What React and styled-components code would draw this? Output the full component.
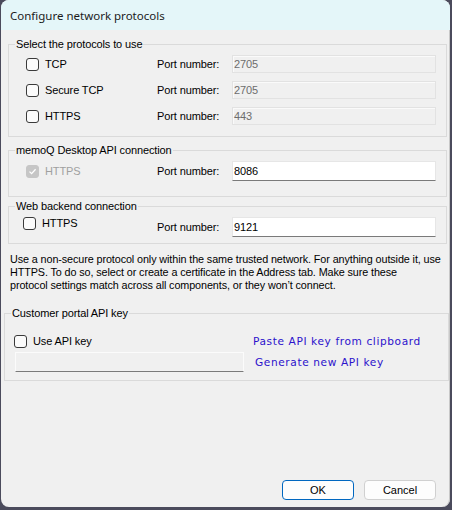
import React from 'react'
import styled, { createGlobalStyle } from 'styled-components'

const GlobalStyle = createGlobalStyle`
  html, body {
    margin: 0;
    padding: 0;
    background: #4b4b5c;
  }
  body {
    font-family: "Liberation Sans", Arial, sans-serif;
    font-size: 11px;
    letter-spacing: -0.12px;
    color: #000;
  }
`

const Window = styled.div`
  margin-left: 1px;
  width: 449px;
  height: 507px;
  background: #f0f0f0;
  border-radius: 8px;
  overflow: hidden;
  display: flex;
  flex-direction: column;
  box-shadow: inset -1px 0 0 #c8c8c8;
`

const TitleBar = styled.div`
  height: 30px;
  flex-shrink: 0;
  background: #e4f6f9;
  display: flex;
  align-items: center;
  padding-left: 9px;
  font-family: "Noto Sans", "Open Sans", sans-serif;
  font-size: 11.5px;
  letter-spacing: 0;
  color: #1b1b1b;
`

const Group = styled.fieldset`
  margin: ${p => p.$top}px 0 0 ${p => p.$left}px;
  width: ${p => p.$width}px;
  box-sizing: border-box;
  padding: 0;
  border: 1px solid #dadada;
  min-width: 0;
`

const Legend = styled.legend`
  margin-left: 6px;
  padding: 0 1px;
  line-height: 14px;
  font-size: 11px;
  color: #000;
`

const GroupBody = styled.div`
  padding: ${p => p.$pad};
  display: flex;
  flex-direction: column;
  gap: 8px;
`

const Row = styled.div`
  display: grid;
  grid-template-columns: ${p => p.$first}px 75px 1fr;
  height: ${p => p.$h}px;
  align-items: center;
`

const CheckLabel = styled.label`
  display: flex;
  align-items: center;
  gap: 6px;
  color: ${p => (p.$disabled ? '#a0a0a0' : '#000')};
  align-self: ${p => (p.$top ? 'start' : 'center')};
  line-height: 13px;
`

const Box = styled.span`
  width: 13px;
  height: 13px;
  box-sizing: border-box;
  border-radius: 3px;
  border: 1px solid ${p => (p.$checked ? '#c6c6c6' : '#3a3a3a')};
  background: ${p => (p.$checked ? '#c6c6c6' : '#fbfbfb')};
  display: flex;
  align-items: center;
  justify-content: center;
  flex-shrink: 0;
`

const PortLabel = styled.span`
  color: #000;
`

const PortInput = styled.div`
  height: ${p => (p.$disabled ? 18 : 20)}px;
  box-sizing: border-box;
  background: ${p => (p.$disabled ? '#f0f0f0' : '#fff')};
  border: 1px solid ${p => (p.$disabled ? '#e2e2e2' : '#e6e6e6')};
  border-bottom-color: ${p => (p.$disabled ? '#e2e2e2' : '#7a7a7a')};
  box-shadow: ${p => (p.$disabled ? 'inset 1px 1px 0 #fafafa' : 'none')};
  color: ${p => (p.$disabled ? '#6d6d6d' : '#000')};
  display: flex;
  align-items: center;
  padding-left: 1px;
`

const Note = styled.p`
  margin: 9px 0 0;
  padding-left: 9px;
  line-height: 13px;
  font-size: 10.8px;
  letter-spacing: -0.1px;
  color: #000;
  white-space: nowrap;
`

const ApiGrid = styled.div`
  padding: 14px 0 8px 9px;
  display: grid;
  grid-template-columns: 239px auto;
  grid-template-rows: 14px 20px;
  row-gap: 4px;
  align-items: center;
`

const KeyField = styled.div`
  height: 20px;
  width: 229px;
  margin-left: 1px;
  box-sizing: border-box;
  background: #f0f0f0;
  border: 1px solid #fbfbfb;
  border-bottom-color: #7a7a7a;
`

const LinkText = styled.a`
  font-family: "DejaVu Sans", Verdana, sans-serif;
  font-size: 10.6px;
  letter-spacing: 0.6px;
  color: #2c12cc;
  text-decoration: none;
  margin-left: ${p => p.$shift || 0}px;
  cursor: pointer;
`

const Footer = styled.div`
  margin-top: auto;
  padding: 0 14px 7px 0;
  display: flex;
  justify-content: flex-end;
  gap: 10px;
`

const Button = styled.button`
  width: 72px;
  height: 20px;
  box-sizing: border-box;
  border-radius: 4px;
  border: 1px solid ${p => (p.$primary ? '#0067c0' : '#d0d0d0')};
  background: #fdfdfd;
  font-family: "Liberation Sans", Arial, sans-serif;
  font-size: 11px;
  color: #000;
  padding: 0;
`

function Check({ checked }) {
  return (
    <Box $checked={checked}>
      {checked && (
        <svg width="9" height="9" viewBox="0 0 9 9">
          <path d="M1.5 4.6 L3.6 6.6 L7.6 2.2" fill="none" stroke="#fff" strokeWidth="1.3" />
        </svg>
      )}
    </Box>
  )
}

const protocols = [
  { name: 'TCP', port: '2705' },
  { name: 'Secure TCP', port: '2705' },
  { name: 'HTTPS', port: '443' },
]

export default function App() {
  return (
    <>
      <GlobalStyle />
      <Window>
        <TitleBar>Configure network protocols</TitleBar>

        <Group $top={7} $left={7} $width={439}>
          <Legend>Select the protocols to use</Legend>
          <GroupBody $pad="4px 10px 11px 17px">
            {protocols.map(p => (
              <Row key={p.name} $first={131} $h={18}>
                <CheckLabel>
                  <Check />
                  {p.name}
                </CheckLabel>
                <PortLabel>Port number:</PortLabel>
                <PortInput $disabled>{p.port}</PortInput>
              </Row>
            ))}
          </GroupBody>
        </Group>

        <Group $top={6} $left={7} $width={439}>
          <Legend>memoQ Desktop API connection</Legend>
          <GroupBody $pad="4px 10px 15px 17px">
            <Row $first={131} $h={20}>
              <CheckLabel $disabled>
                <Check checked />
                HTTPS
              </CheckLabel>
              <PortLabel>Port number:</PortLabel>
              <PortInput>8086</PortInput>
            </Row>
          </GroupBody>
        </Group>

        <Group $top={2} $left={7} $width={439}>
          <Legend>Web backend connection</Legend>
          <GroupBody $pad="4px 10px 6px 14px">
            <Row $first={134} $h={20}>
              <CheckLabel $top>
                <Check />
                HTTPS
              </CheckLabel>
              <PortLabel>Port number:</PortLabel>
              <PortInput>9121</PortInput>
            </Row>
          </GroupBody>
        </Group>

        <Note>
          Use a non-secure protocol only within the same trusted network. For anything outside it, use
          <br />
          HTTPS. To do so, select or create a certificate in the Address tab. Make sure these
          <br />
          protocol settings match across all components, or they won’t connect.
        </Note>

        <Group $top={14} $left={3} $width={445}>
          <Legend>Customer portal API key</Legend>
          <ApiGrid>
            <CheckLabel>
              <Check />
              Use API key
            </CheckLabel>
            <LinkText>Paste API key from clipboard</LinkText>
            <KeyField />
            <LinkText $shift={2}>Generate new API key</LinkText>
          </ApiGrid>
        </Group>

        <Footer>
          <Button $primary>OK</Button>
          <Button>Cancel</Button>
        </Footer>
      </Window>
    </>
  )
}
